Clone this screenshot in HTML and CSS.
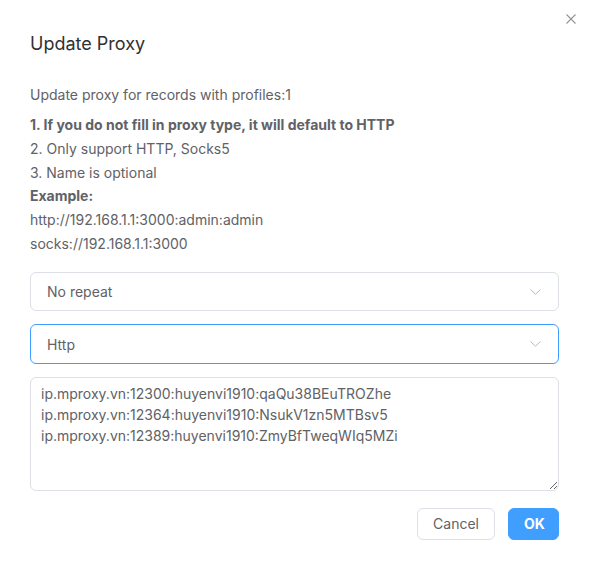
FILE: index.html
```html
<!DOCTYPE html>
<html>
<head>
<meta charset="utf-8">
<link rel="stylesheet" href="styles.css">
</head>
<body>
<div class="dialog">
  <button class="close" aria-label="Close">
    <svg width="10" height="10" viewBox="0 0 10 10"><path d="M0.5 0.5L9.5 9.5M9.5 0.5L0.5 9.5" stroke="#909399" stroke-width="1.1" fill="none"/></svg>
  </button>
  <div class="header">Update Proxy</div>
  <div class="body">
    <p class="lead">Update proxy for records with profiles:1</p>
    <div class="notes">
      <div class="bold">1. If you do not fill in proxy type, it will default to HTTP</div>
      <div>2. Only support HTTP, Socks5</div>
      <div>3. Name is optional</div>
      <div class="bold">Example:</div>
      <div>http://192.168.1.1:3000:admin:admin</div>
      <div>socks://192.168.1.1:3000</div>
    </div>
    <div class="form">
      <div class="select">
        <span>No repeat</span>
        <svg class="chev" width="11" height="6" viewBox="0 0 11 6"><path d="M0.5 0.5L5.5 5.2L10.5 0.5" stroke="#b6bac2" stroke-width="1" fill="none"/></svg>
      </div>
      <div class="select focused">
        <span>Http</span>
        <svg class="chev" width="11" height="6" viewBox="0 0 11 6"><path d="M0.5 0.5L5.5 5.2L10.5 0.5" stroke="#b6bac2" stroke-width="1" fill="none"/></svg>
      </div>
      <textarea class="area" spellcheck="false">ip.mproxy.vn:12300:huyenvi1910:qaQu38BEuTROZhe
ip.mproxy.vn:12364:huyenvi1910:NsukV1zn5MTBsv5
ip.mproxy.vn:12389:huyenvi1910:ZmyBfTweqWIq5MZi</textarea>
    </div>
  </div>
  <div class="footer">
    <button class="btn">Cancel</button>
    <button class="btn primary">OK</button>
  </div>
</div>
</body>
</html>
```
FILE: styles.css
```css
* { box-sizing: border-box; }
html, body { margin: 0; padding: 0; background: #fff; }
body {
  font-family: Inter, "Noto Sans", sans-serif;
  color: #606266;
  width: 589px;
  height: 571px;
}
.dialog {
  position: relative;
  padding: 32px 30px 0 30px;
}
.close {
  position: absolute;
  top: 14px;
  right: 13px;
  width: 10px;
  height: 10px;
  padding: 0;
  border: 0;
  background: none;
  display: flex;
}
.header {
  font-size: 18px;
  line-height: 24px;
  color: #303133;
}
.body {
  margin-top: 27px;
  font-size: 14px;
}
.lead {
  margin: 0;
  line-height: 24px;
}
.notes {
  margin-top: 6px;
  line-height: 23.8px;
}
.bold { font-weight: 700; }
.form {
  margin-top: 16px;
  display: flex;
  flex-direction: column;
  gap: 13px;
}
.select {
  height: 39.5px;
  border: 1px solid #dcdfe6;
  border-radius: 6px;
  display: flex;
  align-items: center;
  justify-content: space-between;
  padding: 0 17px 0 16px;
  color: #606266;
}
.select.focused { border-color: #409eff; }
.chev { display: block; }
.area {
  display: block;
  width: 100%;
  height: 114px;
  border: 1px solid #dcdfe6;
  border-radius: 6px;
  padding: 5px 10px;
  font-family: Inter, "Noto Sans", sans-serif;
  font-size: 14px;
  line-height: 21px;
  color: #606266;
  resize: vertical;
  outline: none;
}
.footer {
  margin-top: 17px;
  display: flex;
  justify-content: flex-end;
  gap: 13px;
}
.btn {
  height: 32px;
  padding: 0 15px;
  border: 1px solid #dcdfe6;
  border-radius: 6px;
  background: #fff;
  font-family: Inter, "Noto Sans", sans-serif;
  font-size: 14px;
  color: #606266;
}
.btn.primary {
  background: #409eff;
  border-color: #409eff;
  color: #fff;
  font-weight: 700;
  padding: 0 15px;
  width: 51px;
}
```
